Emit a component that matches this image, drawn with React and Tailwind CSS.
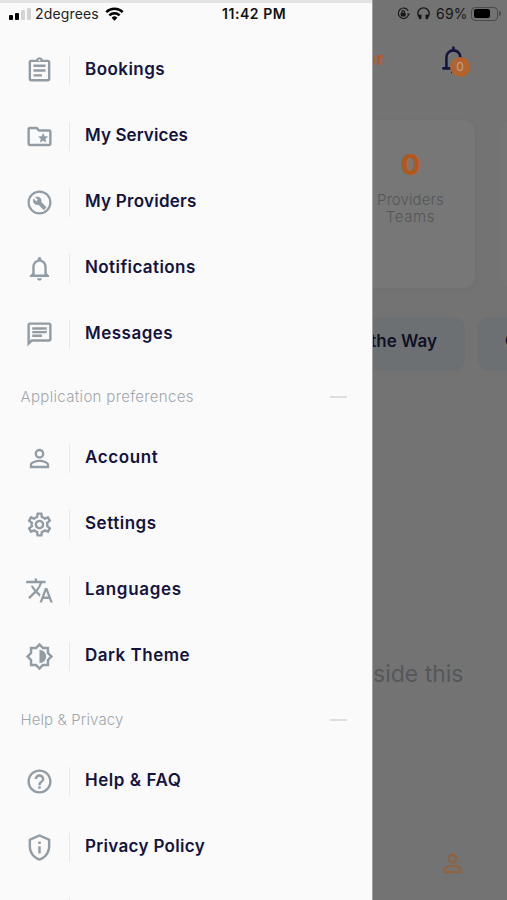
import {
  MdHelpOutline, MdNotificationsNone, MdOutlineAssignment, MdOutlineBrightness6,
  MdOutlineChat, MdOutlineFolderSpecial, MdOutlinePrivacyTip,
  MdOutlineSettings, MdPersonOutline, MdTranslate
} from 'react-icons/md';

// Ring with a filled wrench inside
function WrenchCircle({ className }) {
  return (
    <svg viewBox="0 0 24 24" className={className} fill="none" stroke="currentColor" strokeWidth="1.8">
      <circle cx="12" cy="12" r="9" />
      <path
        d="M17.3 15.7l-4.100-4.100c.4-1.100.2-2.400-.7-3.300-1-1-2.500-1.200-3.700-.6l2.100 2.100-1.500 1.500-2.200-2.100c-.6 1.200-.3 2.700.6 3.700.9.9 2.200 1.100 3.300.7l4.100 4.100c.2.200.5.200.7 0l1.400-1.300c.2-.2.2-.5 0-.7z"
        fill="currentColor"
        strokeWidth="0.5"
      />
    </svg>
  );
}

const MAIN = [
  { label: 'Bookings', icon: MdOutlineAssignment, tracking: 'tracking-[0.45px]' },
  { label: 'My Services', icon: MdOutlineFolderSpecial, tracking: 'tracking-[0.1px]' },
  { label: 'My Providers', icon: WrenchCircle, tracking: 'tracking-[0.25px]' },
  { label: 'Notifications', icon: MdNotificationsNone, tracking: 'tracking-[0.42px]' },
  { label: 'Messages', icon: MdOutlineChat, tracking: 'tracking-[0.5px]' },
];

const PREFERENCES = [
  { label: 'Account', icon: MdPersonOutline, tracking: 'tracking-[0.62px]' },
  { label: 'Settings', icon: MdOutlineSettings, tracking: 'tracking-[0.53px]' },
  { label: 'Languages', icon: MdTranslate, tracking: 'tracking-[0.7px]' },
  { label: 'Dark Theme', icon: MdOutlineBrightness6, tracking: 'tracking-[0.5px]' },
];

const HELP = [
  { label: 'Help & FAQ', icon: MdHelpOutline, tracking: 'tracking-[0.55px]' },
  { label: 'Privacy Policy', icon: MdOutlinePrivacyTip, tracking: 'tracking-[0.33px]' },
];

function MenuItem({ item }) {
  const Icon = item.icon;
  return (
    <div className="flex h-[66px] shrink-0 items-center pl-[25px]">
      <Icon className="mt-px size-[29px] shrink-0 text-[#929ca4]" />
      <div className="ml-[15px] h-[29px] w-px bg-[#e6e8ea]" />
      <span className={`ml-[15px] pb-[3px] text-[17px] leading-6 font-semibold whitespace-nowrap text-[#14133f] ${item.tracking}`}>
        {item.label}
      </span>
    </div>
  );
}

function SectionTitle({ children, tracking }) {
  return (
    <div className="flex h-[58px] shrink-0 items-center justify-between pr-[25px] pl-[20.5px]">
      <span className={`pt-0.5 text-[15px] font-light text-[#a0a7ab] ${tracking}`}>{children}</span>
      <div className="mt-0.5 h-[2px] w-[17px] bg-[#dcdfe0]" />
    </div>
  );
}

function Signal() {
  return (
    <div className="flex h-[12px] items-end gap-[2px]">
      <div className="h-[5px] w-[4px] rounded-[1px] bg-black" />
      <div className="h-[7px] w-[4px] rounded-[1px] bg-black" />
      <div className="h-[10px] w-[4px] rounded-[1px] bg-[#d3d3d3]" />
      <div className="h-[12px] w-[4px] rounded-[1px] bg-[#d3d3d3]" />
    </div>
  );
}

function Wifi() {
  return (
    <svg viewBox="0 0 20 15" className="h-[14px] w-[19px]" fill="none" stroke="#000" strokeWidth="2.7">
      <path d="M1.2 5.4a12.6 12.6 0 0 1 17.6 0" />
      <path d="M4.5 8.9a7.9 7.9 0 0 1 11 0" />
      <path d="M10 14.6l3.1-3.2a4.5 4.5 0 0 0-6.2 0z" fill="#000" stroke="none" />
    </svg>
  );
}

function Drawer() {
  return (
    <aside className="flex h-full w-[372px] shrink-0 flex-col overflow-hidden bg-[#fafafa]">
      <div className="h-[3px] shrink-0 bg-[#e2e2e2]" />
      <div className="flex h-[21px] shrink-0 items-center pl-[9px]">
        <Signal />
        <span className="ml-[4px] w-[66px] text-[14px] tracking-[0.15px] whitespace-nowrap text-[#222]">2degrees</span>
        <span className="ml-[4px]"><Wifi /></span>
        <span className="ml-[98px] text-[14px] font-semibold tracking-[0.55px] whitespace-nowrap text-[#111]">11:42 PM</span>
      </div>
      <nav className="mt-[13px] flex flex-col">
        {MAIN.map(item => <MenuItem key={item.label} item={item} />)}
        <SectionTitle tracking="tracking-[0.33px]">Application preferences</SectionTitle>
        {PREFERENCES.map(item => <MenuItem key={item.label} item={item} />)}
        <div className="mt-px">
          <SectionTitle tracking="tracking-[0.1px]">Help &amp; Privacy</SectionTitle>
        </div>
        {HELP.map(item => <MenuItem key={item.label} item={item} />)}
        <div className="mt-[18px] ml-[69px] h-[29px] w-px bg-[#e6e8ea]" />
      </nav>
    </aside>
  );
}

function DeviceStatus() {
  return (
    <div className="flex h-[27px] shrink-0 items-center pl-[24px] text-[#161616]">
      <svg viewBox="0 0 14 14" className="size-[13px]" fill="none" stroke="currentColor" strokeWidth="1.2">
        <path d="M12 4.1A5.6 5.6 0 1 0 12.5 8" />
        <path d="M10.7 7h3.3l-1.6 2.3z" fill="currentColor" stroke="none" />
        <rect x="4" y="6.2" width="5.2" height="4" rx=".6" fill="currentColor" stroke="none" />
        <path d="M5.2 6.6V5.3a1.4 1.4 0 0 1 2.8 0v1.3" />
      </svg>
      <svg viewBox="0 0 14 14" className="ml-[7px] size-[13px]" fill="none" stroke="currentColor" strokeWidth="1.5">
        <path d="M3.3 12.2C1.8 10.7.9 8.9.9 7a6.1 6.1 0 0 1 12.2 0c0 1.9-.9 3.7-2.4 5.2" />
        <rect x="2.1" y="8" width="2.7" height="5.2" rx="1" fill="currentColor" stroke="none" />
        <rect x="9.2" y="8" width="2.7" height="5.2" rx="1" fill="currentColor" stroke="none" />
      </svg>
      <span className="ml-[6px] w-[32px] text-[14px] tracking-[0.2px]">69%</span>
      <div className="ml-[3px] h-[14px] w-[27px] rounded-[4px] border border-[#4b4b4b] p-[1.5px]">
        <div className="h-full w-[16px] rounded-[2px] bg-black" />
      </div>
      <div className="ml-px h-[5px] w-[2px] rounded-r-full bg-[#4b4b4b]" />
    </div>
  );
}

// Home screen, dimmed while the drawer is open
function Backdrop() {
  return (
    <main className="flex h-full w-[135px] shrink-0 flex-col overflow-hidden border-l border-[#a0a0a0] bg-[#737373]">
      <DeviceStatus />
      <div className="flex h-[65px] shrink-0 items-center">
        <div className="flex w-[11px] justify-end overflow-hidden">
          <span className="pb-[3px] text-[18px] font-bold text-[#b25a26]">er</span>
        </div>
        <div className="relative ml-[55px] size-[32px]">
          <svg viewBox="0 0 32 32" className="size-[32px]" fill="none" stroke="#14163f" strokeWidth="2.6">
            <path d="M7.4 24V13.4a7 7 0 0 1 14 0V24" />
            <path d="M4.400 24.400h20M14.400 3.500v2.500" strokeLinecap="round" />
            <path d="M12 27.800h5" />
          </svg>
          <span className="absolute top-[13px] left-[11px] flex size-[20px] items-center justify-center rounded-full bg-[#b4622e] text-[12px] text-[#b9a69b]">0</span>
        </div>
      </div>
      <div className="mt-[28px] flex h-[168px] shrink-0">
        <div className="flex w-[102px] shrink-0 flex-col items-center rounded-r-xl bg-[#777777] pt-[26px] pr-[27px] shadow-[0_2px_8px_rgba(0,0,0,0.03)]">
          <span className="text-[28px] leading-[38px] font-extrabold text-[#b4571b]">0</span>
          <span className="mt-[7px] flex flex-col items-center text-[15px] leading-[17px] font-light whitespace-nowrap text-[#535657]">
            <span className="tracking-[0.1px]">Providers</span>
            <span className="tracking-[0.6px]">Teams</span>
          </span>
        </div>
        <div className="ml-[25px] w-[20px] shrink-0 rounded-l-xl bg-[#757575]" />
      </div>
      <div className="mt-[29px] flex h-[54px] shrink-0 gap-[13px]">
        <div className="flex w-[92px] shrink-0 items-center justify-end overflow-hidden rounded-r-xl bg-[#6c7073] pr-[28px] pb-[5px]">
          <span className="text-[17px] font-semibold whitespace-nowrap text-[#101026]">the Way</span>
        </div>
        <div className="flex w-[80px] shrink-0 items-center rounded-xl bg-[#6c7073] pb-[5px] pl-[27px]">
          <span className="text-[17px] font-semibold text-[#101026]">C</span>
        </div>
      </div>
      <div className="mt-[286px] h-[34px] shrink-0 text-[23px] leading-[34px] whitespace-nowrap text-[#54585b]">side this</div>
      <div className="mt-[158px] flex shrink-0 pl-[65px]">
        <MdPersonOutline className="size-[29px] text-[#8f6240]" />
      </div>
    </main>
  );
}

export default function App() {
  return (
    <div className="flex h-[900px] w-[507px] overflow-hidden bg-[#fafafa] font-['Inter','Open_Sans',sans-serif]">
      <Drawer />
      <Backdrop />
    </div>
  );
}
